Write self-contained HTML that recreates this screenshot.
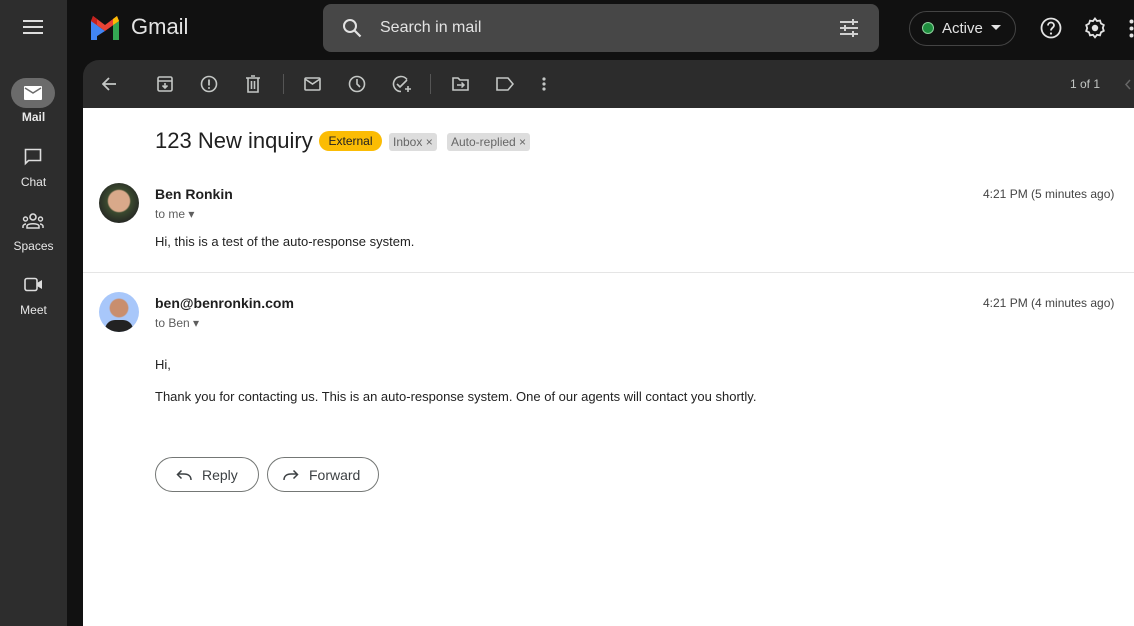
<!DOCTYPE html>
<html><head><meta charset="utf-8"><style>
*{margin:0;padding:0;box-sizing:border-box}
body{width:1134px;height:626px;overflow:hidden;background:#111;font-family:"Liberation Sans",Arial,sans-serif;position:relative}
.side{position:absolute;left:0;top:0;width:67px;height:626px;background:#2d2d2d;color:#fff}
.side .lbl{position:absolute;width:67px;text-align:center;font-size:12px;color:#e8e8e8}
.abs{position:absolute}
.search{position:absolute;left:323px;top:4px;width:556px;height:48px;background:#474747;border-radius:8px}
.toolbar{position:absolute;left:83px;top:60px;width:1051px;height:48px;background:#2c2c2c;border-radius:16px 0 0 0}
.main{position:absolute;left:83px;top:108px;width:1051px;height:518px;background:#fff}
.t{position:absolute;white-space:nowrap}
svg{position:absolute}
.btn{position:absolute;top:349px;height:35px;border:1px solid #747775;border-radius:18px;font-size:14px;color:#3c4043}
</style></head><body>
<div class="side">
  <svg style="left:23px;top:19px" width="20" height="16"><path d="M0 2h20M0 8h20M0 14h20" stroke="#ddd" stroke-width="2"/></svg>
  <div class="abs" style="left:11px;top:78px;width:44px;height:30px;border-radius:15px;background:#6b6b6b"></div>
  <svg style="left:24px;top:86px" width="18" height="14"><rect width="18" height="14" rx="1" fill="#fff"/><path d="M1 2l8 5 8-5" stroke="#6b6b6b" stroke-width="1.5" fill="none"/></svg>
  <div class="lbl" style="top:110px;font-weight:bold">Mail</div>
  <svg style="left:24px;top:148px" width="18" height="18"><path d="M1.5 1.5h15v11h-12l-3 3z" stroke="#ddd" stroke-width="1.6" fill="none"/></svg>
  <div class="lbl" style="top:175px">Chat</div>
  <svg style="left:22px;top:212px" width="22" height="18"><circle cx="11" cy="5" r="3" stroke="#ddd" stroke-width="1.6" fill="none"/><circle cx="3.5" cy="7" r="2" stroke="#ddd" stroke-width="1.4" fill="none"/><circle cx="18.5" cy="7" r="2" stroke="#ddd" stroke-width="1.4" fill="none"/><path d="M5 16v-2c0-3 12-3 12 0v2zM1 16v-2c0-1 2-2 3-2M21 16v-2c0-1-2-2-3-2" stroke="#ddd" stroke-width="1.5" fill="none"/></svg>
  <div class="lbl" style="top:239px">Spaces</div>
  <svg style="left:24px;top:277px" width="20" height="16"><rect x="1" y="1.5" width="12" height="12" rx="2" stroke="#ddd" stroke-width="1.6" fill="none"/><path d="M13 6l5-3v9l-5-3" fill="#ddd"/></svg>
  <div class="lbl" style="top:303px">Meet</div>
</div>
<svg style="left:89px;top:16px" width="32" height="24" viewBox="0 0 32 24"><path d="M2 24V5l14 10" fill="#4285f4"/><path d="M2 24h6V9L2 5z" fill="#4285f4"/><path d="M24 24h6V5l-6 4z" fill="#34a853"/><path d="M2 5l14 10 14-10-2-5-12 9L4 0z" fill="#ea4335"/><path d="M24 9l6-4-2-5-4 3z" fill="#fbbc04"/><path d="M2 5l6 4V3L4 0z" fill="#c5221f"/></svg>
<div class="t" style="left:131px;top:14px;font-size:22px;color:#e3e3e3">Gmail</div>
<div class="search">
  <svg style="left:19px;top:14px" width="20" height="20"><circle cx="8" cy="8" r="6" stroke="#e3e3e3" stroke-width="2" fill="none"/><path d="M12.5 12.5l6 6" stroke="#e3e3e3" stroke-width="2.2"/></svg>
  <div class="t" style="left:57px;top:15px;font-size:16px;color:#e3e3e3">Search in mail</div>
  <svg style="left:516px;top:15px" width="20" height="18"><path d="M1 3h12M15 3h4M14 0v6M1 9h4M7 9h12M6 6v6M1 15h12M15 15h4M14 12v6" stroke="#e3e3e3" stroke-width="1.8"/></svg>
</div>
<div class="abs" style="left:909px;top:11px;width:107px;height:35px;border:1px solid #444;border-radius:18px"></div>
<div class="abs" style="left:922px;top:22px;width:12px;height:12px;border-radius:6px;background:#1e8e3e;border:1px solid #8fd19e"></div>
<div class="t" style="left:942px;top:20px;font-size:15px;color:#e3e3e3">Active</div>
<svg style="left:991px;top:25px" width="10" height="6"><path d="M0 0h10L5 5z" fill="#e3e3e3"/></svg>
<svg style="left:1040px;top:17px" width="22" height="22"><circle cx="11" cy="11" r="9.5" stroke="#e3e3e3" stroke-width="1.8" fill="none"/><path d="M8 8.5c0-4 6-4 6 0 0 2-3 2.5-3 5" stroke="#e3e3e3" stroke-width="1.8" fill="none"/><circle cx="11" cy="16.5" r="1.1" fill="#e3e3e3"/></svg>
<svg style="left:1084px;top:17px" width="22" height="22" viewBox="0 0 22 22"><path d="M11 1.5l2 2.5 3-.5 1 3 2.8 1.5-1 2.9 1 2.9-2.8 1.5-1 3-3-.5-2 2.5-2-2.5-3 .5-1-3L2.2 14l1-2.9-1-2.9L5 6.6l1-3 3 .5z" stroke="#e3e3e3" stroke-width="1.8" fill="none"/><circle cx="11" cy="11" r="3.2" fill="#e3e3e3"/></svg>
<svg style="left:1129px;top:19px" width="5" height="20"><circle cx="2.5" cy="2.5" r="2" fill="#e3e3e3"/><circle cx="2.5" cy="9.5" r="2" fill="#e3e3e3"/><circle cx="2.5" cy="16.5" r="2" fill="#e3e3e3"/></svg>
<div class="toolbar">
  <svg style="left:19px;top:17px" width="14" height="14"><path d="M14 7H2M7 1L1 7l6 6" stroke="#c4c7c5" stroke-width="1.8" fill="none"/></svg>
  <svg style="left:74px;top:16px" width="16" height="16"><rect x="1" y="1" width="14" height="14" rx="1.5" stroke="#c4c7c5" stroke-width="1.6" fill="none"/><path d="M1 5h14M8 7v5M5.5 9.5L8 12l2.5-2.5" stroke="#c4c7c5" stroke-width="1.6" fill="none"/></svg>
  <svg style="left:117px;top:15px" width="18" height="18"><circle cx="9" cy="9" r="7.5" stroke="#c4c7c5" stroke-width="1.6" fill="none"/><path d="M9 4.5v6" stroke="#c4c7c5" stroke-width="1.8"/><circle cx="9" cy="13" r="1" fill="#c4c7c5"/></svg>
  <svg style="left:163px;top:15px" width="14" height="18"><path d="M0 3h14M5 1h4M2 3v14h10V3M5.5 6v8M8.5 6v8" stroke="#c4c7c5" stroke-width="1.6" fill="none"/></svg>
  <div class="abs" style="left:200px;top:14px;width:1px;height:20px;background:#555"></div>
  <svg style="left:221px;top:17px" width="17" height="14"><rect x="1" y="1" width="15" height="12" rx="1" stroke="#c4c7c5" stroke-width="1.6" fill="none"/><path d="M1 2l7.5 5L16 2" stroke="#c4c7c5" stroke-width="1.6" fill="none"/></svg>
  <svg style="left:265px;top:15px" width="18" height="18"><circle cx="9" cy="9" r="7.5" stroke="#c4c7c5" stroke-width="1.6" fill="none"/><path d="M9 4v5l3 3" stroke="#c4c7c5" stroke-width="1.6" fill="none"/></svg>
  <svg style="left:309px;top:15px" width="20" height="19"><path d="M15 4.5A7.5 7.5 0 1 0 9 16.5" stroke="#c4c7c5" stroke-width="1.6" fill="none"/><path d="M5 9l3 3 7-7M13 14h6M16 11v6" stroke="#c4c7c5" stroke-width="1.6" fill="none"/></svg>
  <div class="abs" style="left:347px;top:14px;width:1px;height:20px;background:#555"></div>
  <svg style="left:369px;top:17px" width="17" height="14"><path d="M1 1h5l2 2h8v10H1z" stroke="#c4c7c5" stroke-width="1.6" fill="none"/><path d="M5 8h7M9.5 5.5L12 8l-2.5 2.5" stroke="#c4c7c5" stroke-width="1.5" fill="none"/></svg>
  <svg style="left:413px;top:17px" width="18" height="14"><path d="M1 1h11l5 6-5 6H1z" stroke="#c4c7c5" stroke-width="1.6" fill="none"/></svg>
  <svg style="left:459px;top:17px" width="4" height="14"><circle cx="2" cy="2" r="1.6" fill="#c4c7c5"/><circle cx="2" cy="7" r="1.6" fill="#c4c7c5"/><circle cx="2" cy="12" r="1.6" fill="#c4c7c5"/></svg>
  <div class="t" style="left:987px;top:17px;font-size:12px;color:#c4c7c5">1 of 1</div>
  <svg style="left:1041px;top:19px" width="8" height="11"><path d="M6 1L2 5.5 6 10" stroke="#666" stroke-width="1.5" fill="none"/></svg>
</div>
<div class="main">
  <div class="t" style="left:72px;top:20px;font-size:22px;color:#1f1f1f">123 New inquiry</div>
  <div class="t" style="left:236px;top:23px;height:20px;width:63px;border-radius:10px;background:#fbbc04;font-size:12px;color:#202124;text-align:center;line-height:20px">External</div>
  <div class="t" style="left:306px;top:25px;height:18px;padding:0 4px;border-radius:3px;background:#ddd;font-size:12px;color:#666;line-height:18px">Inbox ×</div>
  <div class="t" style="left:364px;top:25px;height:18px;padding:0 4px;border-radius:3px;background:#ddd;font-size:12px;color:#666;line-height:18px">Auto-replied ×</div>

  <div class="abs" style="left:16px;top:75px;width:40px;height:40px;border-radius:20px;background:radial-gradient(circle at 50% 45%,#d9a98a 0 35%,#3b4a2f 40%,#222 80%)"></div>
  <div class="t" style="left:72px;top:78px;font-size:14px;font-weight:bold;color:#1f1f1f">Ben Ronkin</div>
  <div class="t" style="left:72px;top:99px;font-size:12px;color:#5e5e5e">to me ▾</div>
  <div class="t" style="left:900px;top:79px;font-size:12px;color:#444">4:21 PM (5 minutes ago)</div>
  <div class="t" style="left:72px;top:126px;font-size:13px;color:#222">Hi, this is a test of the auto-response system.</div>
  <div class="abs" style="left:0;top:164px;width:1051px;height:1px;background:#e5e5e5"></div>

  <div class="abs" style="left:16px;top:184px;width:40px;height:40px;border-radius:20px;background:radial-gradient(circle at 50% 40%,#c98e6e 0 28%,#a8c7fa 32%);overflow:hidden"><div class="abs" style="left:6px;top:28px;width:28px;height:14px;border-radius:10px 10px 0 0;background:#222"></div></div>
  <div class="t" style="left:72px;top:187px;font-size:14px;font-weight:bold;color:#1f1f1f">ben@benronkin.com</div>
  <div class="t" style="left:72px;top:208px;font-size:12px;color:#5e5e5e">to Ben ▾</div>
  <div class="t" style="left:900px;top:188px;font-size:12px;color:#444">4:21 PM (4 minutes ago)</div>
  <div class="t" style="left:72px;top:249px;font-size:13px;color:#222">Hi,</div>
  <div class="t" style="left:72px;top:281px;font-size:13px;color:#222">Thank you for contacting us. This is an auto-response system. One of our agents will contact you shortly.</div>

  <div class="btn" style="left:72px;width:104px">
    <svg style="left:20px;top:11px" width="16" height="12"><path d="M15 11c0-4-3-6-7-6H2M5.5 1.5L1.5 5.5l4 4" stroke="#3c4043" stroke-width="1.5" fill="none"/></svg>
    <div class="t" style="left:46px;top:9px">Reply</div>
  </div>
  <div class="btn" style="left:184px;width:112px">
    <svg style="left:15px;top:11px" width="16" height="12"><path d="M1 11c0-4 3-6 7-6h6M10.5 1.5l4 4-4 4" stroke="#3c4043" stroke-width="1.5" fill="none"/></svg>
    <div class="t" style="left:41px;top:9px">Forward</div>
  </div>
</div>
</body></html>
